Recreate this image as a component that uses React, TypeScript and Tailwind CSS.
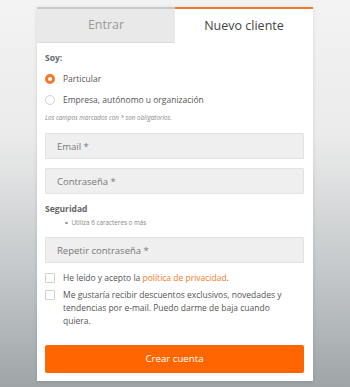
import React, { useState } from 'react';

const font = { fontFamily: '"Open Sans", "Liberation Sans", sans-serif' };

const App: React.FC = () => {
  const [tab, setTab] = useState<'login' | 'signup'>('signup');
  const [tipo, setTipo] = useState<'particular' | 'empresa'>('particular');
  const [privacy, setPrivacy] = useState(false);
  const [news, setNews] = useState(false);

  return (
    <div
      className="w-[350px] h-[387px] overflow-hidden pt-[7px] bg-[linear-gradient(180deg,#f3f3f3_0%,#ebebeb_35%,#c4c8ca_70%,#9fa5a7_100%)]"
      style={font}
    >
      <div className="ml-[37px] w-[276px] bg-white shadow-[0_1px_4px_rgba(0,0,0,0.12)]">
        {/* Tabs */}
        <div className="flex h-[36px]">
          <button
            onClick={() => setTab('login')}
            className={`w-[138px] h-full flex items-center justify-center text-[12.5px] border-t-2 ${
              tab === 'login'
                ? 'bg-white border-[#f07a2a] text-[#444]'
                : 'bg-[#e9e9e9] border-[#c9c9c9] border-b border-b-[#dcdcdc] text-[#9a9a9a]'
            }`}
          >
            Entrar
          </button>
          <button
            onClick={() => setTab('signup')}
            className={`w-[138px] h-full flex items-center justify-center text-[12.5px] border-t-2 ${
              tab === 'signup'
                ? 'bg-white border-[#f07a2a] text-[#444]'
                : 'bg-[#e9e9e9] border-[#c9c9c9] border-b border-b-[#dcdcdc] text-[#9a9a9a]'
            }`}
          >
            Nuevo cliente
          </button>
        </div>

        {/* Form */}
        <div className="pl-[8px] pr-[9px] pt-[9px] pb-[8px]">
          <div className="text-[8.5px] leading-[12px] font-bold text-[#666]">Soy:</div>

          <div className="mt-[8px] flex flex-col gap-[7px]">
            <Radio checked={tipo === 'particular'} onClick={() => setTipo('particular')} label="Particular" />
            <Radio checked={tipo === 'empresa'} onClick={() => setTipo('empresa')} label="Empresa, autónomo u organización" />
          </div>

          <p className="mt-[6px] text-[6.3px] leading-[10px] italic text-[#888]">
            Los campos marcados con * son obligatorios.
          </p>

          <Field placeholder="Email *" className="mt-[10px]" />
          <Field placeholder="Contraseña *" type="password" className="mt-[9px]" />

          <div className="mt-[9px] text-[8.5px] leading-[12px] font-bold text-[#666]">Seguridad</div>
          <ul className="mt-[3px] pl-[20px] text-[6.3px] leading-[10px] text-[#888]">
            <li className="flex items-center gap-[4px]">
              <span className="w-[2.5px] h-[2.5px] rounded-full bg-[#999]" />
              Utiliza 6 caracteres o más
            </li>
          </ul>

          <Field placeholder="Repetir contraseña *" type="password" className="mt-[9px]" />

          <div className="mt-[8px] flex flex-col gap-[4px] text-[8.5px] leading-[13px] text-[#555]">
            <Check checked={privacy} onClick={() => setPrivacy(!privacy)}>
              He leído y acepto la <span className="text-[#f07a2a]">política de privacidad</span>.
            </Check>
            <Check checked={news} onClick={() => setNews(!news)}>
              Me gustaría recibir descuentos exclusivos, novedades y tendencias por e-mail. Puedo darme de baja cuando quiera.
            </Check>
          </div>

          <button className="mt-[18px] w-full h-[28px] rounded-[2px] bg-[#ff6600] text-white text-[9.7px]">
            Crear cuenta
          </button>
        </div>
      </div>
    </div>
  );
};

interface RadioProps {
  checked: boolean;
  onClick: () => void;
  label: string;
}

const Radio: React.FC<RadioProps> = ({ checked, onClick, label }) => (
  <button onClick={onClick} className="flex items-center h-[14px] text-[8.5px] text-[#555] text-left">
    {checked ? (
      <span className="w-[10px] h-[10px] rounded-full bg-[#f07a2a] flex items-center justify-center">
        <span className="w-[4px] h-[4px] rounded-full bg-white" />
      </span>
    ) : (
      <span className="w-[10px] h-[10px] rounded-full border border-[#d0d0d0] bg-white" />
    )}
    <span className="ml-[8px]">{label}</span>
  </button>
);

interface FieldProps {
  placeholder: string;
  type?: string;
  className?: string;
}

const Field: React.FC<FieldProps> = ({ placeholder, type = 'text', className = '' }) => (
  <input
    type={type}
    placeholder={placeholder}
    className={`block w-full h-[26px] px-[11px] bg-[#efefef] border border-[#e2e2e2] rounded-[1px] text-[9.5px] text-[#555] placeholder:text-[#777] outline-none ${className}`}
    style={font}
  />
);

interface CheckProps {
  checked: boolean;
  onClick: () => void;
  children: React.ReactNode;
}

const Check: React.FC<CheckProps> = ({ checked, onClick, children }) => (
  <div className="flex items-start cursor-pointer" onClick={onClick}>
    <span
      className={`mt-[2px] shrink-0 w-[10px] h-[10px] rounded-[1px] border ${
        checked ? 'bg-[#f07a2a] border-[#f07a2a]' : 'bg-white border-[#d0d0d0]'
      }`}
    />
    <span className="ml-[8px] mr-[16px]">{children}</span>
  </div>
);

export default App;
